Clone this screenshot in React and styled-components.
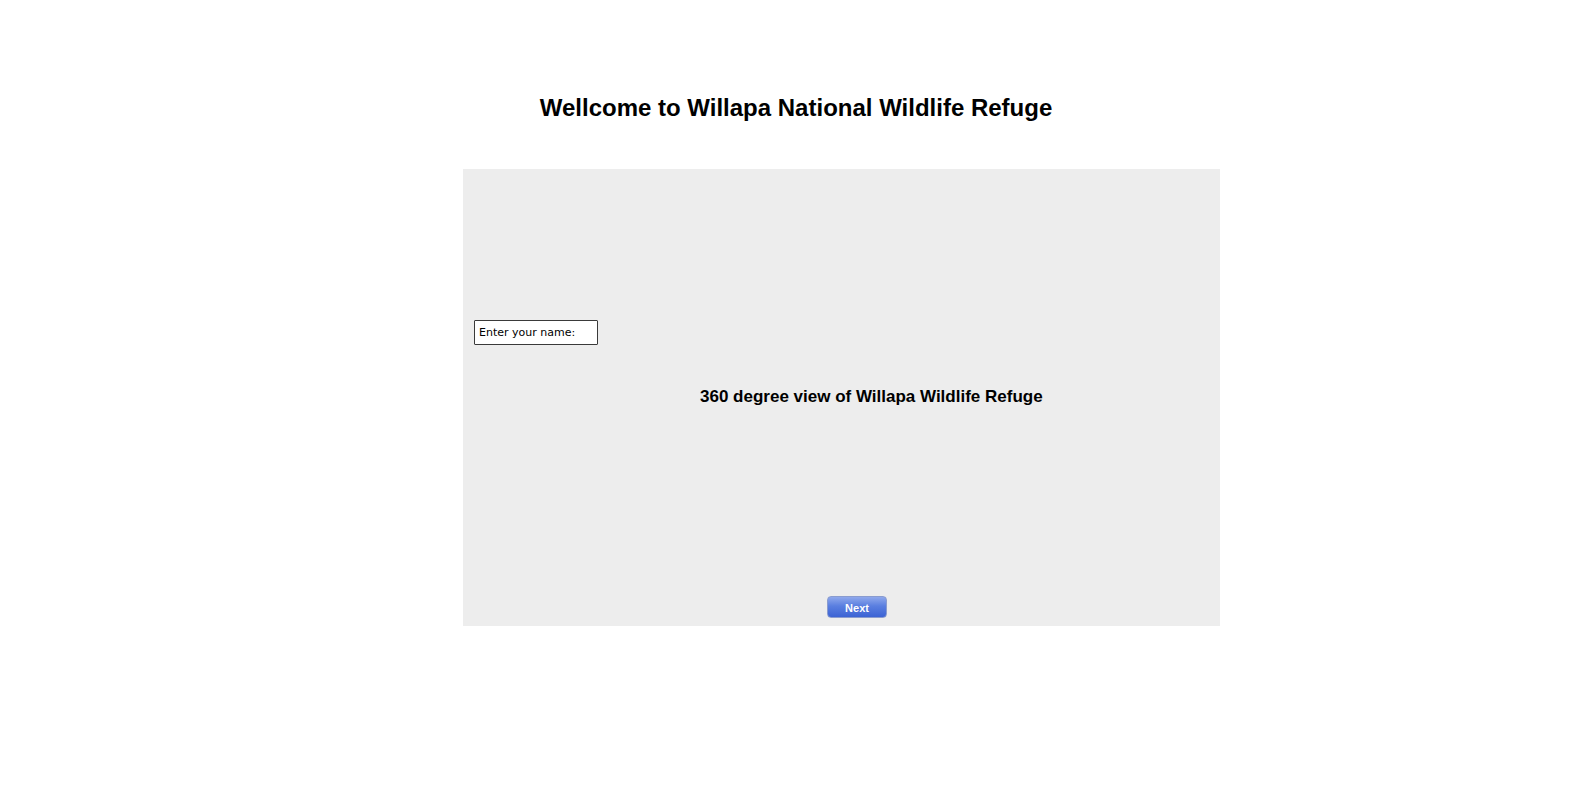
import React from "react";
import styled, { createGlobalStyle } from "styled-components";

const Global = createGlobalStyle`
  html, body { margin: 0; padding: 0; background: #ffffff; }
  body { font-family: "Liberation Sans", Arial, sans-serif; }
`;

const Page = styled.div`
  width: 1592px;
  height: 793px;
  display: flex;
  flex-direction: column;
  box-sizing: border-box;
  padding-top: 92px;
`;

const Title = styled.h1`
  margin: 0;
  height: 32px;
  line-height: 32px;
  text-align: center;
  font-size: 24px;
  font-weight: bold;
  color: #000;
`;

const Panel = styled.div`
  margin-top: 45px;
  margin-left: 463px;
  width: 757px;
  height: 457px;
  background: #ededed;
  display: flex;
  flex-direction: column;
  box-sizing: border-box;
  padding: 151px 0 8px 11px;
`;

const NameBox = styled.div`
  width: 124px;
  height: 25px;
  box-sizing: border-box;
  border: 1px solid #3a3a3a;
  border-radius: 1px;
  background: #fff;
  font-family: "Comic Sans MS", "DejaVu Sans", cursive;
  font-size: 11px;
  line-height: 23px;
  padding-left: 4px;
  color: #000;
`;

const Subtitle = styled.div`
  margin-top: 42px;
  margin-left: 226px;
  font-size: 17px;
  font-weight: bold;
  line-height: 20px;
  color: #000;
`;

const Spacer = styled.div`
  flex: 1;
`;

const NextButton = styled.button`
  align-self: flex-start;
  margin-left: 353px;
  width: 60px;
  height: 22px;
  padding: 1px 0 0;
  border: 1px solid #8a9ccf;
  border-radius: 4px;
  background: linear-gradient(to bottom, #8fa8ec 0%, #5a7fe0 45%, #3c63d4 100%);
  color: #fff;
  font-family: "Liberation Sans", Arial, sans-serif;
  font-weight: bold;
  font-size: 11px;
  cursor: pointer;
`;

export default function App() {
  return (
    <>
      <Global />
      <Page>
        <Title>Wellcome to Willapa National Wildlife Refuge</Title>
        <Panel>
          <NameBox>Enter your name:</NameBox>
          <Subtitle>360 degree view of Willapa Wildlife Refuge</Subtitle>
          <Spacer />
          <NextButton>Next</NextButton>
        </Panel>
      </Page>
    </>
  );
}
